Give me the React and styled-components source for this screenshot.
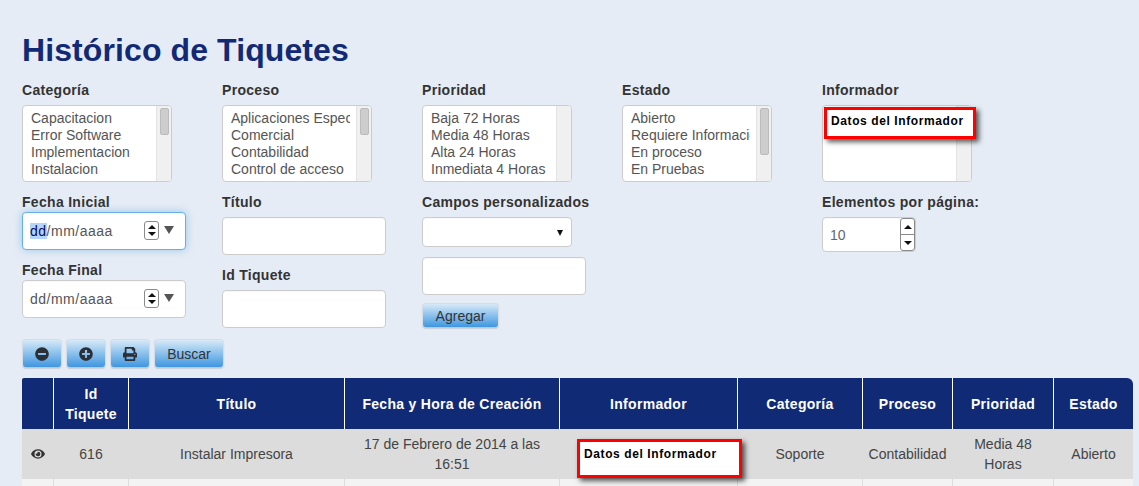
import React from 'react';
import styled, { createGlobalStyle } from 'styled-components';
import { FaEye, FaMinusCircle, FaPlusCircle, FaPrint } from 'react-icons/fa';

const GlobalStyle = createGlobalStyle`
  html, body {
    margin: 0;
    height: 486px;
    overflow: hidden;
    background: #e6ecf5;
  }
  body {
    font-family: 'Liberation Sans', Arial, sans-serif;
    font-size: 14px;
    color: #333;
  }
`;

const Page = styled.div`
  height: 486px;
  overflow: hidden;
  padding: 30px 6px 0 22px;
  box-sizing: border-box;
`;

const Title = styled.h1`
  margin: 0 0 10px;
  height: 40px;
  font-size: 32px;
  line-height: 40px;
  font-weight: 700;
  letter-spacing: 0.1px;
  color: #122a75;
`;

const Filters = styled.div`
  display: flex;
  align-items: flex-start;
  margin-bottom: 11px;
`;

const Column = styled.div`
  width: 200px;
  display: flex;
  flex-direction: column;
`;

const Field = styled.div`
  display: flex;
  flex-direction: column;
  margin-bottom: ${(p) => p.$mb ?? 10}px;
`;

const Label = styled.label`
  font-weight: 700;
  line-height: 20px;
  letter-spacing: 0.3px;
  margin-bottom: ${(p) => (p.$tight ? 0 : 5)}px;
  color: #333;
`;

const ListBox = styled.div`
  position: relative;
  width: 150px;
  height: 77px;
  box-sizing: border-box;
  background: #fff;
  border: 1px solid #ccc;
  border-radius: 4px;
  display: flex;
  overflow: hidden;
`;

const Options = styled.div`
  flex: 1;
  min-width: 0;
  margin: 0 6px 0 8px;
  padding-top: 4px;
  overflow: hidden;
  white-space: nowrap;
  line-height: 17px;
  color: #555;
`;

const Track = styled.div`
  width: 15px;
  flex: none;
  background: #f0f0f0;
  border-left: 1px solid #e3e3e3;
  box-sizing: border-box;
  padding: 2px 2px 0 3px;
`;

const Thumb = styled.div`
  height: ${(p) => p.$h}px;
  background: #cdcdcd;
  border: 1px solid #bcbcbc;
  border-radius: 2px;
  box-sizing: border-box;
`;

const Callout = styled.div`
  position: absolute;
  box-sizing: border-box;
  background: #fff;
  border: 3px solid #f00;
  box-shadow: 3px 3px 5px rgba(0, 0, 0, 0.65);
  color: #000;
  font-weight: 700;
  font-size: 12px;
  letter-spacing: 0.6px;
  line-height: 14px;
  white-space: nowrap;
  padding: 4px 4px;
  z-index: 2;
`;

const ListCallout = styled(Callout)`
  left: 1px;
  top: 1px;
  width: 152px;
  height: 32px;
`;

const CellCallout = styled(Callout)`
  left: 17px;
  top: 10px;
  width: 165px;
  height: 39px;
  padding-top: 5px;
  text-align: left;
`;

const InformerBox = styled(ListBox)`
  overflow: visible;
`;

const FilledTrack = styled(Track)`
  margin-left: auto;
  border-radius: 0 3px 3px 0;
`;

const Control = styled.div`
  box-sizing: border-box;
  width: ${(p) => p.$w || 164}px;
  height: ${(p) => p.$h || 38}px;
  background: #fff;
  border: 1px solid ${(p) => (p.$focus ? '#66afe9' : '#ccc')};
  border-radius: 4px;
  box-shadow: ${(p) => (p.$focus ? '0 0 8px rgba(102, 175, 233, 0.6)' : 'inset 0 1px 1px rgba(0, 0, 0, 0.03)')};
  display: flex;
  align-items: center;
  color: #555;
`;

const DateText = styled.span`
  margin-left: 7px;
  letter-spacing: 0.5px;
  color: #555;
`;

const Selected = styled.span`
  background: #b4d5fa;
  color: #0a0a5a;
`;

const SpinBox = styled.div`
  width: 15px;
  height: 19px;
  box-sizing: border-box;
  border: 1px solid #8a8a8a;
  border-radius: 3px;
  background: #fff;
  display: flex;
  flex-direction: column;
  align-items: center;
  justify-content: center;
  gap: 3px;
  margin: -1px 0 0 auto;
`;

const Arrow = styled.i`
  display: block;
  width: 0;
  height: 0;
  border-left: ${(p) => p.$s || 4}px solid transparent;
  border-right: ${(p) => p.$s || 4}px solid transparent;
  ${(p) => (p.$down ? 'border-top' : 'border-bottom')}: ${(p) => p.$t || 4}px solid ${(p) => p.$c || '#111'};
`;

const DateCaret = styled.span`
  margin: -3px 11px 0 5px;
`;

const SelectCaret = styled.span`
  margin: 2px 8px 0 auto;
`;

const NumberText = styled.span`
  margin-left: 7px;
  color: #666;
`;

const NumberSpin = styled.div`
  margin-left: auto;
  width: 15px;
  height: 33px;
  box-sizing: border-box;
  border: 1px solid #8a8a8a;
  border-radius: 3px;
  display: flex;
  flex-direction: column;
`;

const NumberSpinPart = styled.div`
  flex: 1;
  display: flex;
  align-items: center;
  justify-content: center;
  & + & {
    border-top: 1px solid #8a8a8a;
  }
`;

const Toolbar = styled.div`
  display: flex;
  gap: 4px;
  margin-bottom: 10px;
`;

const Button = styled.button`
  box-sizing: border-box;
  width: ${(p) => p.$w || 40}px;
  height: ${(p) => p.$h || 29}px;
  padding: 0;
  display: flex;
  align-items: center;
  justify-content: center;
  border: 1px solid #d5dde8;
  border-bottom-color: #b9c9da;
  border-radius: 4px;
  background: linear-gradient(to bottom, #d7e9f8 0%, #3f97e0 100%);
  box-shadow: 0 1px 1px rgba(0, 0, 0, 0.12);
  font-family: inherit;
  font-size: 14px;
  color: #333;
  svg {
    font-size: 14px;
    color: #2b2f36;
  }
`;

const Table = styled.table`
  width: 1111px;
  border-collapse: separate;
  border-spacing: 0;
  table-layout: fixed;
`;

const Head = styled.th`
  background: #112a76;
  color: #fff;
  height: 51px;
  padding: 0 4px;
  box-sizing: border-box;
  font-weight: 700;
  letter-spacing: 0.3px;
  line-height: 20px;
  border-left: 1px solid #fff;
  &:first-child {
    border-left: 0;
    border-top-left-radius: 2px;
  }
  &:last-child {
    border-top-right-radius: 6px;
  }
`;

const Cell = styled.td`
  position: relative;
  background: ${(p) => (p.$light ? '#f3f3f3' : '#dcdcdc')};
  height: 50px;
  padding: 0 4px;
  box-sizing: border-box;
  text-align: center;
  line-height: 20px;
  color: #444;
  border-left: 1px solid ${(p) => (p.$light ? '#ddd' : '#dcdcdc')};
  &:first-child {
    border-left: 0;
  }
  svg {
    display: block;
    margin: 0 auto;
    font-size: 14px;
    color: #333;
  }
`;

const widths = [31, 75, 216, 215, 178, 125, 90, 101, 80];
const headers = ['', 'Id Tiquete', 'Título', 'Fecha y Hora de Creación', 'Informador', 'Categoría', 'Proceso', 'Prioridad', 'Estado'];

const ListField = ({ label, items, thumb }) => (
  <Field>
    <Label>{label}</Label>
    <ListBox>
      <Options>
        {items.map((item) => (
          <div key={item}>{item}</div>
        ))}
      </Options>
      <Track>{thumb ? <Thumb $h={thumb} /> : null}</Track>
    </ListBox>
  </Field>
);

const DateField = ({ label, focus, children }) => (
  <Field $mb={focus ? 10 : 0}>
    <Label $tight>{label}</Label>
    <Control $focus={focus}>
      <DateText>{children}</DateText>
      <SpinBox>
        <Arrow />
        <Arrow $down />
      </SpinBox>
      <DateCaret>
        <Arrow $down $s={5} $t={8} $c="#555" />
      </DateCaret>
    </Control>
  </Field>
);

const App = () => (
  <Page>
    <GlobalStyle />
    <Title>Histórico de Tiquetes</Title>
    <Filters>
      <Column>
        <ListField label="Categoría" thumb={27} items={['Capacitacion', 'Error Software', 'Implementacion', 'Instalacion']} />
        <DateField label="Fecha Inicial" focus>
          <Selected>dd</Selected>/mm/aaaa
        </DateField>
        <DateField label="Fecha Final">dd/mm/aaaa</DateField>
      </Column>
      <Column>
        <ListField label="Proceso" thumb={27} items={['Aplicaciones Especiales', 'Comercial', 'Contabilidad', 'Control de acceso']} />
        <Field>
          <Label>Título</Label>
          <Control />
        </Field>
        <Field $mb={0}>
          <Label>Id Tiquete</Label>
          <Control />
        </Field>
      </Column>
      <Column>
        <ListField label="Prioridad" items={['Baja 72 Horas', 'Media 48 Horas', 'Alta 24 Horas', 'Inmediata 4 Horas']} />
        <Field $mb={10}>
          <Label>Campos personalizados</Label>
          <Control $w={150} $h={30}>
            <SelectCaret>
              <Arrow $down $s={3} $t={6} $c="#111" />
            </SelectCaret>
          </Control>
        </Field>
        <Field $mb={8}>
          <Control />
        </Field>
        <Button $w={77} $h={25}>Agregar</Button>
      </Column>
      <Column>
        <ListField label="Estado" thumb={47} items={['Abierto', 'Requiere Información', 'En proceso', 'En Pruebas']} />
      </Column>
      <Column>
        <Field>
          <Label>Informador</Label>
          <InformerBox>
            <ListCallout>Datos del Informador</ListCallout>
            <FilledTrack />
          </InformerBox>
        </Field>
        <Field $mb={0}>
          <Label>Elementos por página:</Label>
          <Control $w={94} $h={35}>
            <NumberText>10</NumberText>
            <NumberSpin>
              <NumberSpinPart>
                <Arrow />
              </NumberSpinPart>
              <NumberSpinPart>
                <Arrow $down />
              </NumberSpinPart>
            </NumberSpin>
          </Control>
        </Field>
      </Column>
    </Filters>
    <Toolbar>
      <Button aria-label="Contraer">
        <FaMinusCircle />
      </Button>
      <Button aria-label="Expandir">
        <FaPlusCircle />
      </Button>
      <Button aria-label="Imprimir">
        <FaPrint />
      </Button>
      <Button $w={70}>Buscar</Button>
    </Toolbar>
    <Table>
      <colgroup>
        {widths.map((w, i) => (
          <col key={i} width={w} />
        ))}
      </colgroup>
      <thead>
        <tr>
          {headers.map((h, i) => (
            <Head key={i}>{h}</Head>
          ))}
        </tr>
      </thead>
      <tbody>
        <tr>
          <Cell>
            <FaEye />
          </Cell>
          <Cell>616</Cell>
          <Cell>Instalar Impresora</Cell>
          <Cell>17 de Febrero de 2014 a las 16:51</Cell>
          <Cell>
            <CellCallout>Datos del Informador</CellCallout>
          </Cell>
          <Cell>Soporte</Cell>
          <Cell>Contabilidad</Cell>
          <Cell>Media 48 Horas</Cell>
          <Cell>Abierto</Cell>
        </tr>
        <tr>
          {headers.map((h, i) => (
            <Cell key={i} $light />
          ))}
        </tr>
      </tbody>
    </Table>
  </Page>
);

export default App;
